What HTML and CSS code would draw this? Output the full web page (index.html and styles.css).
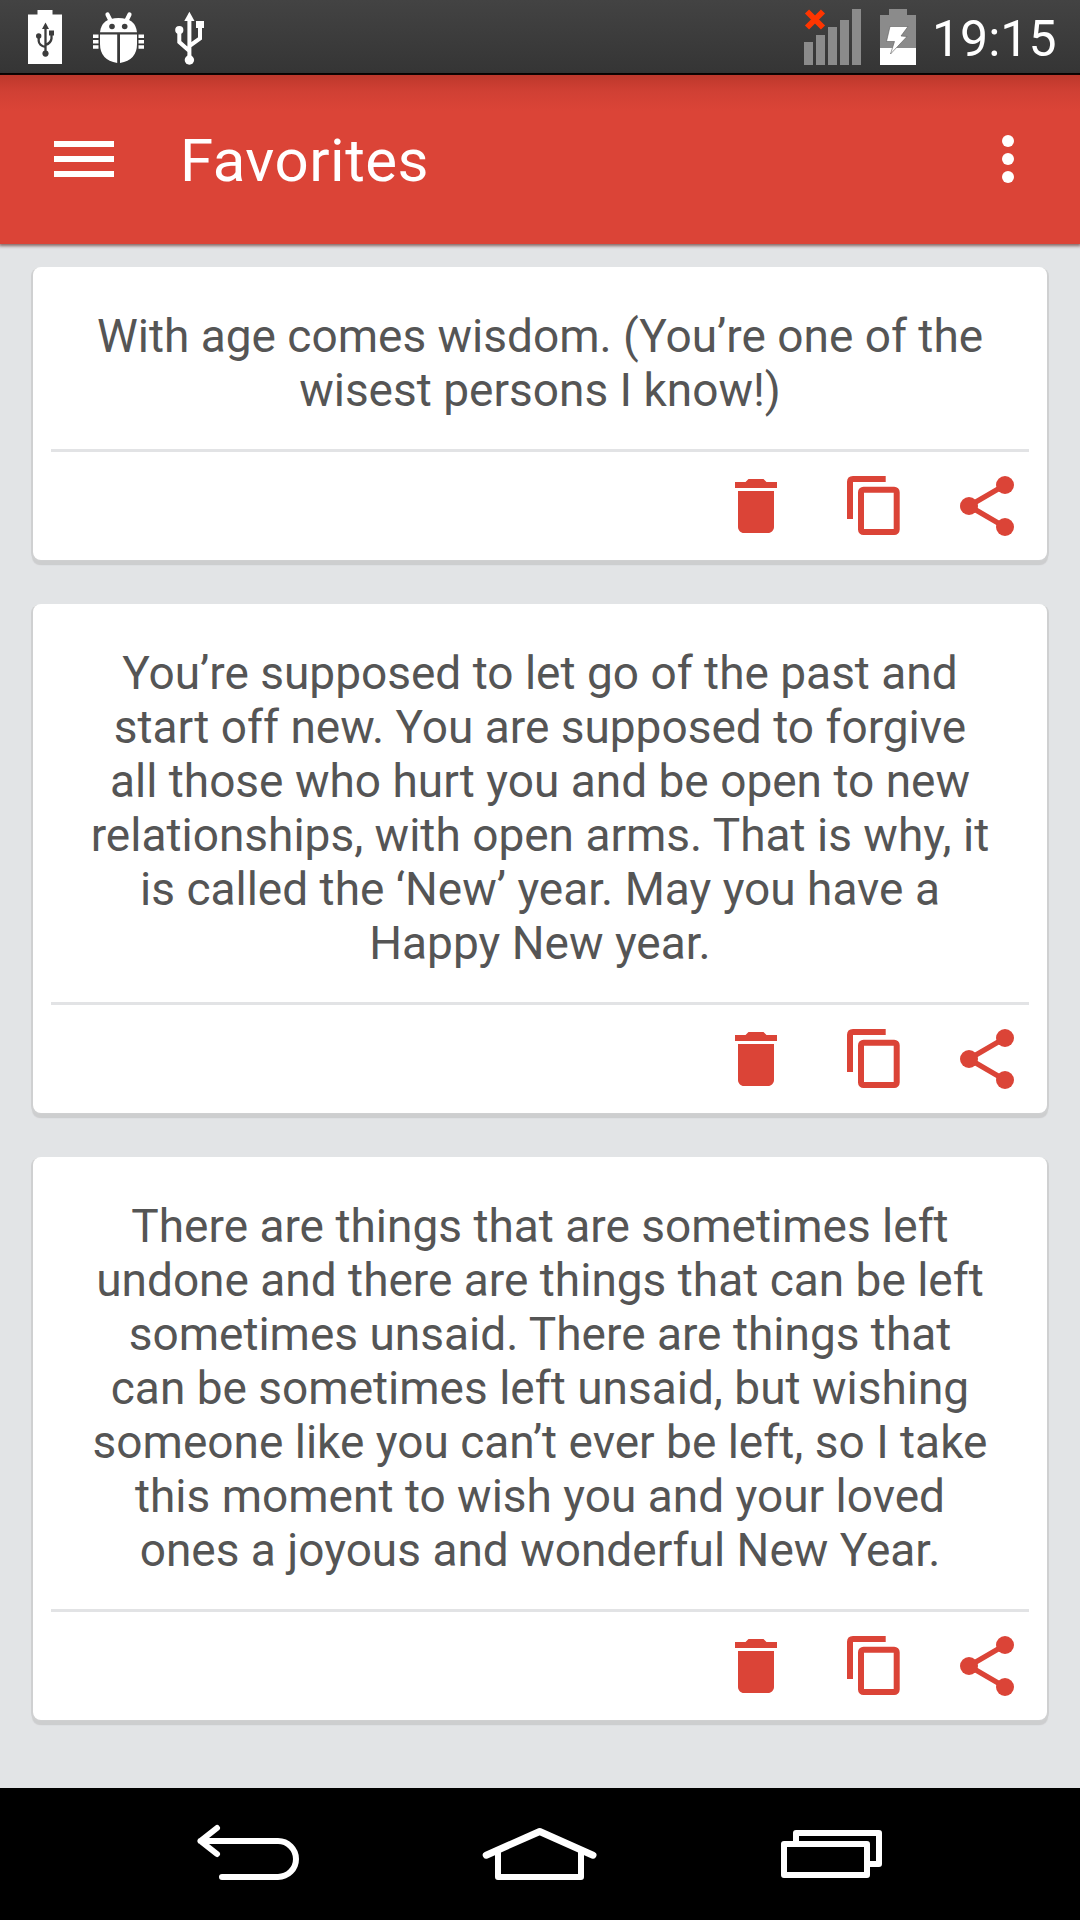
FILE: index.html
```html
<!DOCTYPE html>
<html lang="en">
<head>
    <meta charset="UTF-8">
    <meta name="viewport" content="width=device-width, initial-scale=1.0">
    <title>Favorites</title>
    <link rel="stylesheet" href="styles.css">
</head>
<body>
    <!-- Shared card icons -->
    <svg class="icon-defs">
        <symbol id="icon-delete" viewBox="1 0 24 24">
            <path d="M6 19c0 1.1.9 2 2 2h8c1.1 0 2-.9 2-2V7H6v12zM19 4h-3.5l-1-1h-5l-1 1H5v2h14V4z" fill="currentColor"/>
        </symbol>
        <symbol id="icon-copy" viewBox="0 0 72 72">
            <path d="M48.7 9H16Q13 9 13 12V49" fill="none" stroke="currentColor" stroke-width="6"/>
            <rect x="24" y="19.7" width="35.7" height="42.3" rx="2.5" fill="none" stroke="currentColor" stroke-width="6"/>
        </symbol>
        <symbol id="icon-share" viewBox="0 0 24 24">
            <path d="M18 5L6 12l12 7" fill="none" stroke="currentColor" stroke-width="1.8"/>
            <circle cx="18" cy="5" r="3" fill="currentColor"/>
            <circle cx="6" cy="12" r="3" fill="currentColor"/>
            <circle cx="18" cy="19" r="3" fill="currentColor"/>
        </symbol>
    </svg>

    <!-- Status Bar -->
    <div class="status-bar">
        <div class="status-left">
            <svg width="34" height="73" viewBox="28 0 34 73">
                <path d="M37.5 10h15v4.5H62V64H28V14.5h9.5z" fill="#fff"/>
                <path d="M45.5 28v24M38.7 37v4Q39 45.500 45.500 47M51.500 34v4.500Q51 43 45.500 45" fill="none" stroke="#3c3c3c" stroke-width="2.300"/>
                <g fill="#3c3c3c">
                    <path d="M45.5 22.5L49 29H42z"/>
                    <circle cx="45.5" cy="53.6" r="3.1"/>
                    <circle cx="38.7" cy="36" r="2.7"/>
                    <rect x="49" y="30.5" width="5" height="5"/>
                </g>
            </svg>
            <svg width="51" height="73" viewBox="92 0 51 73">
                <path d="M106.5 14.5l3 6M128.5 14.5l-3 6" stroke="#fff" stroke-width="4.2" stroke-linecap="round"/>
                <path d="M99 32.3Q100.500 18 117.500 18T136 32.300z" fill="#fff"/>
                <circle cx="111" cy="26.5" r="2.8" fill="#3e3e3e"/>
                <circle cx="123.7" cy="26.5" r="2.8" fill="#3e3e3e"/>
                <path d="M99 34.5h17.200v28.600Q99 60 99 44zM136 34.500h-17v28.600Q136 60 136 44z" fill="#fff"/>
                <path d="M92 36.2h5.500M92 41.800h5.500M92 47h5.500M137.500 36.200h5.500M137.500 41.800h5.500M137.500 47h5.500" stroke="#fff" stroke-width="3.4"/>
            </svg>
            <svg width="29" height="73" viewBox="174 0 29 73">
                <path d="M188.4 19v40M178.300 31v11l10.100 9M199 27v11.500L188.400 46" fill="none" stroke="#fff" stroke-width="4"/>
                <path d="M188.4 11.700L193.500 21h-10.200z" fill="#fff"/>
                <circle cx="188.4" cy="60" r="4.7" fill="#fff"/>
                <circle cx="178.3" cy="30" r="4.1" fill="#fff"/>
                <rect x="195" y="21" width="8" height="7" fill="#fff"/>
            </svg>
        </div>
        <div class="status-right">
            <svg width="57" height="73" viewBox="804 0 57 73">
                <path d="M804 42h9v23h-9zM816 35h9v30h-9zM828 27h9v38h-9zM840 20h9v45h-9zM852 9h9v56h-9z" fill="#8b8b8b"/>
                <path d="M807 11.5l16 16M823 11.500l-16 16" stroke="#ff3500" stroke-width="5.8"/>
            </svg>
            <svg width="36" height="73" viewBox="880 0 36 73">
                <path d="M889 9h18v6h9v33h-36V15h9z" fill="#8b8b8b"/>
                <path d="M880 48h36v17h-36z" fill="#fff"/>
                <path d="M890 26.5h18l-7 9.500 6 .5L890.500 54l4-12.500h-8z" fill="#fff" stroke="#5a5a5a" stroke-width=".6"/>
            </svg>
            <span class="clock">19:15</span>
        </div>
    </div>

    <!-- Toolbar -->
    <div class="toolbar">
        <svg class="menu-icon" viewBox="0 0 60 36">
            <path d="M0 0h60v6H0zM0 15h60v6H0zM0 30h60v6H0z" fill="#fff"/>
        </svg>
        <h1>Favorites</h1>
        <svg class="more-icon" viewBox="0 0 12 48">
            <circle cx="6" cy="6" r="6" fill="#fff"/>
            <circle cx="6" cy="24" r="6" fill="#fff"/>
            <circle cx="6" cy="42" r="6" fill="#fff"/>
        </svg>
    </div>

    <!-- Favorites List -->
    <div class="list">
        <div class="card">
            <p class="message">With age comes wisdom. (You’re one of the<br>wisest persons I know!)</p>
            <div class="actions">
                <svg class="action"><use href="#icon-delete"/></svg>
                <svg class="action"><use href="#icon-copy"/></svg>
                <svg class="action"><use href="#icon-share"/></svg>
            </div>
        </div>

        <div class="card">
            <p class="message">You’re supposed to let go of the past and<br>start off new. You are supposed to forgive<br>all those who hurt you and be open to new<br>relationships, with open arms. That is why, it<br>is called the ‘New’ year. May you have a<br>Happy New year.</p>
            <div class="actions">
                <svg class="action"><use href="#icon-delete"/></svg>
                <svg class="action"><use href="#icon-copy"/></svg>
                <svg class="action"><use href="#icon-share"/></svg>
            </div>
        </div>

        <div class="card">
            <p class="message">There are things that are sometimes left<br>undone and there are things that can be left<br>sometimes unsaid. There are things that<br>can be sometimes left unsaid, but wishing<br>someone like you can’t ever be left, so I take<br>this moment to wish you and your loved<br>ones a joyous and wonderful New Year.</p>
            <div class="actions">
                <svg class="action"><use href="#icon-delete"/></svg>
                <svg class="action"><use href="#icon-copy"/></svg>
                <svg class="action"><use href="#icon-share"/></svg>
            </div>
        </div>
    </div>

    <!-- Navigation Bar -->
    <div class="nav-bar">
        <svg class="nav-icon" viewBox="0 0 120 132">
            <path d="M27 40L10.5 53L27 66M10.5 53H88a18 18 0 0 1 0 36H32"/>
        </svg>
        <svg class="nav-icon" viewBox="0 0 120 132">
            <path d="M18 62v27h83V62"/>
            <path class="roof" d="M6.2 67.2L59.7 43.5l53.3 23.7"/>
        </svg>
        <svg class="nav-icon" viewBox="0 0 120 132">
            <rect x="26" y="45" width="83" height="31"/>
            <rect x="14" y="56" width="83" height="31"/>
        </svg>
    </div>
</body>
</html>
```

FILE: styles.css
```css
* {
    box-sizing: border-box;
}
body {
    font-family: Roboto, "Noto Sans", sans-serif;
    margin: 0;
    height: 1920px;
    display: flex;
    flex-direction: column;
    background-color: #e2e4e6;
    overflow: hidden;
}
svg {
    display: block;
    flex: none;
}
.icon-defs {
    display: none;
}

/* Status bar */
.status-bar {
    display: flex;
    justify-content: space-between;
    height: 75px;
    padding: 0 23px 0 28px;
    background: linear-gradient(#434343, #353535);
    border-bottom: 2px solid #000;
}
.status-left {
    display: flex;
    gap: 31px;
}
.status-right {
    display: flex;
    gap: 19px;
}
.clock {
    width: 122px;
    margin-left: -3px;
    margin-right: 3px;
    color: #fff;
    font-size: 50px;
    line-height: 79px;
    white-space: nowrap;
}

/* Toolbar */
.toolbar {
    display: flex;
    align-items: center;
    flex: none;
    height: 169px;
    padding: 0 66px 1px 54px;
    background: linear-gradient(#bd382c, #d04034 16px, #db4437 36px);
    box-shadow: 0 1px 3px 1px rgba(70,20,15,0.6);
}
.menu-icon {
    width: 60px;
    height: 36px;
}
.toolbar h1 {
    flex: 1;
    margin: 4px 0 0 66px;
    color: #fff;
    font-size: 60px;
    font-weight: 400;
    letter-spacing: 0.5px;
    line-height: 70px;
}
.more-icon {
    width: 12px;
    height: 48px;
}

/* Cards */
.list {
    flex: 1;
    display: flex;
    flex-direction: column;
    gap: 44px;
    padding: 23px 33px 0 33px;
}
.card {
    padding: 0 18px;
    background: white;
    border-radius: 8px;
    box-shadow: -2px 1px 0 #cfd0d1, 2px 1px 0 #cfd0d1, -1px 5px 1px #cdcecf, 1px 5px 1px #cdcecf;
}
.message {
    margin: 0;
    padding: 42px 0 32px;
    border-bottom: 3px solid #e2e3e5;
    color: #555;
    font-size: 46px;
    line-height: 54px;
    text-align: center;
    white-space: nowrap;
}
.actions {
    display: flex;
    justify-content: flex-end;
    gap: 42px;
    padding: 18px 6px;
    color: #db4437;
}
.action {
    width: 72px;
    height: 72px;
}

/* Navigation bar */
.nav-bar {
    display: flex;
    justify-content: center;
    gap: 170px;
    height: 132px;
    background: #000;
}
.nav-icon {
    width: 120px;
    height: 132px;
    fill: #000;
    stroke: #fff;
    stroke-width: 6;
    stroke-linecap: round;
    stroke-linejoin: round;
}
.nav-icon .roof {
    fill: none;
    stroke-width: 7;
}
```
